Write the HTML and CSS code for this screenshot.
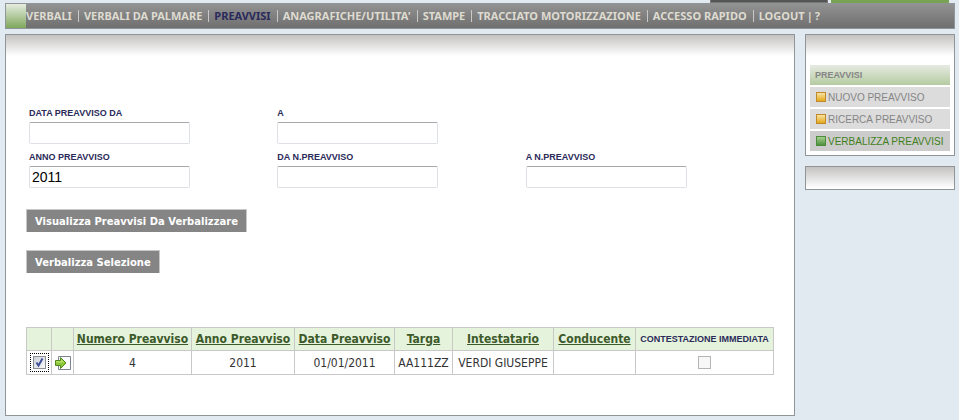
FILE: index.html
```html
<!DOCTYPE html>
<html lang="it">
<head>
  <meta charset="UTF-8">
  <title>Preavvisi</title>
  <link rel="stylesheet" href="styles.css">
</head>
<body>

  <div class="tabs">
    <div class="tab"></div>
    <div class="tab green"></div>
  </div>

  <nav class="menu">
    <span class="corner"></span>
    <a href="#">VERBALI</a>
    <a href="#">VERBALI DA PALMARE</a>
    <a href="#" class="current">PREAVVISI</a>
    <a href="#">ANAGRAFICHE/UTILITA'</a>
    <a href="#">STAMPE</a>
    <a href="#">TRACCIATO MOTORIZZAZIONE</a>
    <a href="#">ACCESSO RAPIDO</a>
    <a href="#">LOGOUT</a>
    <span class="bar">|</span>
    <a href="#" class="help">?</a>
  </nav>

  <div class="page">
    <main class="box content">
      <form>
        <div class="fields">
          <div class="field">
            <label for="dataDa">DATA PREAVVISO DA</label>
            <input type="text" id="dataDa">
          </div>
          <div class="field">
            <label for="dataA">A</label>
            <input type="text" id="dataA">
          </div>
          <div class="field first">
            <label for="anno">ANNO PREAVVISO</label>
            <input type="text" id="anno" value="2011">
          </div>
          <div class="field">
            <label for="daNumero">DA N.PREAVVISO</label>
            <input type="text" id="daNumero">
          </div>
          <div class="field">
            <label for="aNumero">A N.PREAVVISO</label>
            <input type="text" id="aNumero">
          </div>
        </div>

        <div class="buttons">
          <button type="button">Visualizza Preavvisi Da Verbalizzare</button>
          <button type="button">Verbalizza Selezione</button>
        </div>

        <table>
          <colgroup>
            <col class="c-check"><col class="c-open"><col class="c-numero"><col class="c-anno"><col class="c-data">
            <col class="c-targa"><col class="c-nome"><col class="c-conducente"><col class="c-immediata">
          </colgroup>
          <thead>
            <tr>
              <th></th>
              <th></th>
              <th><a href="#">Numero Preavviso</a></th>
              <th><a href="#">Anno Preavviso</a></th>
              <th><a href="#">Data Preavviso</a></th>
              <th><a href="#">Targa</a></th>
              <th><a href="#">Intestatario</a></th>
              <th><a href="#">Conducente</a></th>
              <th class="small" id="immediata">CONTESTAZIONE IMMEDIATA</th>
            </tr>
          </thead>
          <tbody>
            <tr>
              <td><span class="focus"><input type="checkbox" aria-label="Seleziona" checked></span></td>
              <td>
                <a href="#" class="open" aria-label="Apri">
                  <svg width="16" height="16" viewBox="0 0 16 16">
                    <path d="M3.500 1.500h12v13h-12z" fill="#fbfcfe" stroke="#7c8494"/>
                    <path d="M.5 5.500h5v-3l5.500 5.500-5.500 5.500v-3h-5z" fill="#8cc63a" stroke="#4f8a1a"/>
                    <path d="M1 6h5v-2l3.500 3.500h-8.500z" fill="#b5df62"/>
                  </svg>
                </a>
              </td>
              <td>4</td>
              <td>2011</td>
              <td>01/01/2011</td>
              <td>AA111ZZ</td>
              <td>VERDI GIUSEPPE</td>
              <td></td>
              <td><input type="checkbox" aria-labelledby="immediata" disabled></td>
            </tr>
          </tbody>
        </table>
      </form>
    </main>

    <aside class="side">
      <div class="box side-menu">
        <h2>PREAVVISI</h2>
        <a href="#"><span class="dot"></span>NUOVO PREAVVISO</a>
        <a href="#"><span class="dot"></span>RICERCA PREAVVISO</a>
        <a href="#" class="active"><span class="dot"></span>VERBALIZZA PREAVVISI</a>
      </div>
      <div class="box empty"></div>
    </aside>
  </div>

</body>
</html>
```
FILE: styles.css
```css
* {
  box-sizing: border-box;
}

body {
  margin: 0;
  padding: 0 4px 4px 5px;
  background: #e1e9f1;
  font-family: "DejaVu Sans Condensed", "DejaVu Sans", sans-serif;
  font-size: 12px;
  color: #333;
}

.tabs {
  display: flex;
  justify-content: flex-end;
  gap: 3px;
  padding-right: 6px;
}

.tab {
  width: 118px;
  height: 3px;
  background: #555;
  border: solid #777;
  border-width: 0 1px 1px;
}

.tab.green {
  background: #7aa255;
  border: none;
}

.menu {
  display: flex;
  align-items: center;
  height: 26px;
  border: 1px solid #909598;
  background: linear-gradient(#929292, #6f6f6f);
  font-family: "Noto Sans", sans-serif;
  font-size: 11px;
  font-weight: bold;
  white-space: nowrap;
}

.menu a {
  color: #dedbd0;
  text-decoration: none;
  line-height: 12px;
}

.menu a + a {
  margin-left: 6px;
  padding-left: 5px;
  border-left: 1px solid #c8c8c8;
}

.menu a.current {
  color: #2a2a5c;
}

.menu .bar {
  margin: 0 2px;
  color: #dedbd0;
  line-height: 12px;
}

.corner {
  width: 20px;
  height: 24px;
  background: linear-gradient(#e6ede0, #7fa75c);
}

.page {
  display: flex;
  align-items: flex-start;
  gap: 10px;
  margin-top: 5px;
}

.box {
  border: 1px solid #909598;
  background: #fff linear-gradient(#c4c2c1, #fff) no-repeat top / 100% 21px;
}

.content {
  flex: 1;
  padding: 69px 20px 40px;
}

.fields {
  display: grid;
  grid-template-columns: repeat(3, 1fr);
  row-gap: 4px;
  padding-left: 3px;
}

.field.first {
  grid-column: 1;
}

.field label {
  display: block;
  line-height: 18px;
}

.field label,
.small {
  font-family: "Liberation Sans", Arial, sans-serif;
  font-size: 9px;
  font-weight: bold;
  color: #2b2b5a;
}

.field input {
  display: block;
  width: 161px;
  height: 22px;
  padding: 0 2px;
  border: 1px solid #dde1e5;
  border-top-color: #a5a8ab;
  border-radius: 2px;
  background: #fff;
  font-family: "Liberation Sans", Arial, sans-serif;
  font-size: 14px;
}

.buttons {
  display: flex;
  flex-direction: column;
  align-items: flex-start;
  gap: 18px;
  margin: 21px 0 54px;
}

button {
  height: 23px;
  padding: 0 8px;
  border: solid #c8c8c8;
  border-width: 1px 1px 0;
  background: #858585;
  color: #fff;
  font-family: "DejaVu Sans", Verdana, sans-serif;
  font-size: 10px;
  font-weight: bold;
}

table {
  border-collapse: collapse;
  table-layout: fixed;
  width: 748px;
}

.c-check { width: 25px; }
.c-open { width: 22px; }
.c-numero { width: 118px; }
.c-anno { width: 103px; }
.c-data { width: 100px; }
.c-targa { width: 58px; }
.c-nome { width: 101px; }
.c-conducente { width: 82px; }
.c-immediata { width: 138px; }

th,
td {
  padding: 0;
  border: 1px solid #c8c8c8;
  text-align: center;
  white-space: nowrap;
}

th {
  height: 23px;
  background: #e6f3dc;
}

td {
  height: 24px;
}

th a {
  color: #3c5a2a;
}

.focus {
  display: inline-block;
  padding: 2px;
  border: 1px dotted #000;
  vertical-align: middle;
}

input[type="checkbox"] {
  appearance: none;
  display: block;
  width: 13px;
  height: 13px;
  margin: 0 auto;
  border: 1px solid #8a8f94;
  background: linear-gradient(135deg, #cdd3da, #f8f8f8);
}

input[type="checkbox"]:disabled {
  border-color: #b4b4b4;
  background: #f7f7f7;
}

input[type="checkbox"]:checked {
  background: url("data:image/svg+xml,%3Csvg xmlns='http://www.w3.org/2000/svg' viewBox='0 0 11 11'%3E%3Cpath d='M2.5 5.5l2 3 4-7' fill='none' stroke='%233f4f9a' stroke-width='2'/%3E%3C/svg%3E") center / 11px no-repeat, linear-gradient(135deg, #cdd3da, #f8f8f8);
}

.open svg {
  display: block;
  margin: 0 auto;
}

.side {
  width: 150px;
}

.side-menu {
  display: flex;
  flex-direction: column;
  gap: 2px;
  padding: 30px 4px 4px;
  font-family: "Liberation Sans", Arial, sans-serif;
}

.side-menu h2,
.side-menu a {
  display: flex;
  align-items: center;
  height: 20px;
  margin: 0;
  padding-left: 6px;
  background: #dcdcdc;
  color: #858585;
  font-size: 10px;
  text-decoration: none;
  white-space: nowrap;
}

.side-menu h2 {
  padding-left: 5px;
  background: linear-gradient(#e6ebe2, #b5cba1);
  font-size: 9px;
}

.side-menu a.active {
  background: #cdcccc;
  color: #3f7f1c;
}

.dot {
  width: 10px;
  height: 10px;
  margin-right: 2px;
  border: 1px solid #c08a2c;
  background: linear-gradient(#f7e3a0, #e3a91c);
}

.active .dot {
  border-color: #4c8a3c;
  background: linear-gradient(#a5cf8e, #4f9140);
}

.empty {
  height: 24px;
  margin-top: 10px;
}
```
